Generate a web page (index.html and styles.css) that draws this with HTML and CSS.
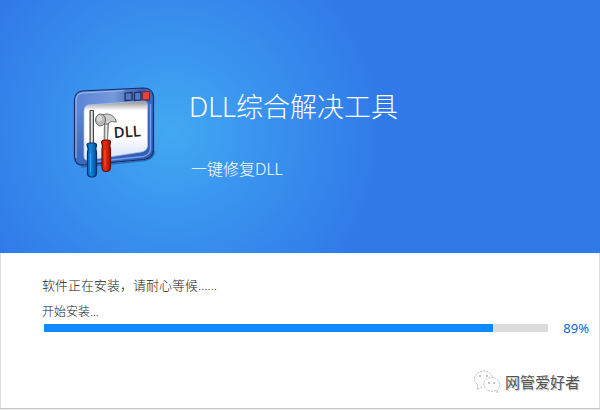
FILE: index.html
```
<!DOCTYPE html>
<html lang="zh-CN">
<head>
    <meta charset="UTF-8">
    <meta name="viewport" content="width=device-width, initial-scale=1.0">
    <title>DLL综合解决工具</title>
    <link rel="stylesheet" href="styles.css">
</head>
<body>

    <header class="banner">
        <svg class="app-icon" viewBox="0 0 100 105" aria-hidden="true">
            <defs>
                <linearGradient id="frame" x1="0" y1="0" x2="1" y2="1">
                    <stop offset="0" stop-color="#6f98dc"/>
                    <stop offset="0.45" stop-color="#3f6cc0"/>
                    <stop offset="1" stop-color="#2f59ad"/>
                </linearGradient>
                <linearGradient id="bar" x1="0" y1="0" x2="1" y2="0">
                    <stop offset="0" stop-color="#5c86d6"/>
                    <stop offset="0.5" stop-color="#7699da"/>
                    <stop offset="1" stop-color="#2c4c98"/>
                </linearGradient>
                <linearGradient id="paper" x1="0" y1="0" x2="0" y2="1">
                    <stop offset="0" stop-color="#8d8d8d"/>
                    <stop offset="0.16" stop-color="#ffffff"/>
                    <stop offset="0.6" stop-color="#ffffff"/>
                    <stop offset="1" stop-color="#d3e3f8"/>
                </linearGradient>
                <linearGradient id="blue" x1="0" y1="0" x2="1" y2="0">
                    <stop offset="0" stop-color="#0764b8"/>
                    <stop offset="0.4" stop-color="#1188e0"/>
                    <stop offset="1" stop-color="#034b96"/>
                </linearGradient>
                <linearGradient id="red" x1="0" y1="0" x2="1" y2="0">
                    <stop offset="0" stop-color="#c61d08"/>
                    <stop offset="0.4" stop-color="#ea2c0c"/>
                    <stop offset="1" stop-color="#a51002"/>
                </linearGradient>
                <linearGradient id="steel" x1="0" y1="0" x2="1" y2="0">
                    <stop offset="0" stop-color="#777777"/>
                    <stop offset="0.5" stop-color="#f4f4f4"/>
                    <stop offset="1" stop-color="#858585"/>
                </linearGradient>
            </defs>
            <!-- window -->
            <path d="M17 87 L81 80.500 Q90 79 90.500 71" fill="none" stroke="#173d80" stroke-opacity="0.5" stroke-width="1.500"/>
            <path d="M18 11 L79 8 Q89 8 89.500 17 V70 Q89 78 80 79.500 L20 85 Q11 86 10.500 77 V20 Q11 12 18 11Z" fill="url(#frame)" stroke="#172d66" stroke-width="1.200"/>
            <path d="M18 12.500 L79 9.500 Q85 9.500 86 17 V21 L22 25 Q18 26 17 33 L13 35 V21 Q13 13 18 12.500Z" fill="url(#bar)"/>
            <path d="M12 78 V21 Q12 14 18 13 L60 10.500" fill="none" stroke="#9dbcf0" stroke-width="1"/>
            <path d="M86.500 24 V69 Q86 75 79 76.500 L24 82.500" fill="none" stroke="#6f9df0" stroke-width="1.500"/>
            <path d="M24 25 L79 21 Q83.500 21 83.500 26 V66 Q83 71 77 72 L25 80 Q20 81 20 76 V31 Q20 26 24 25Z" fill="url(#paper)" stroke="#a9c4f2" stroke-width="0.800"/>
            <path d="M61 13 L68 12.500 V20 L61 20.500Z M70.500 12.500 L77 12 V20 L70.500 20.500Z" fill="#5578bd" stroke="#172c63" stroke-width="1.200"/>
            <path d="M78.500 12 L85.500 11.500 V19.500 L78.500 20Z" fill="#ee4030" stroke="#7f2633"/>
            <text class="icon-text" x="50" y="58" transform="rotate(-4 50 58)">DLL</text>
            <!-- screwdriver -->
            <path d="M26 30.500 H29.500 V64 H26Z" fill="url(#steel)" stroke="#454545" stroke-width="1"/>
            <path d="M23 65 Q23 63 26 63 H30 Q32.500 63 32.500 65 L31.800 69 L32.500 72 V93 Q32.500 97 28 97 Q23.500 97 23.500 93 V72 L24.200 69Z" fill="url(#blue)" stroke="#062f65" stroke-width="1.200"/>
            <path d="M26.500 73 V92" stroke="#3ba0ec" stroke-width="1"/>
            <!-- hammer -->
            <path d="M40.500 43 H44.500 L43.500 62 H40Z" fill="url(#steel)" stroke="#666666" stroke-width="0.800"/>
            <path d="M37 35 L43 34 Q50 34 52.500 42 L47 41.500 L44 44 L38 44Z" fill="#cecece" stroke="#5b5b5b" stroke-width="0.800"/>
            <ellipse cx="36.500" cy="40" rx="5" ry="6" fill="#b9b9b9" stroke="#666666"/>
            <ellipse cx="35.500" cy="38.500" rx="2.500" ry="3" fill="#d9d9d9"/>
            <path d="M37.500 62 Q38 60 41 60 H44 Q46.500 60 46.500 62 L45.800 66 L46.500 69 V87 Q46.500 91.500 42 91.500 Q38 91.500 38 87 V69 L38.500 66Z" fill="url(#red)" stroke="#650f06" stroke-width="1.200"/>
            <path d="M41 70 V86" stroke="#fa5531" stroke-width="1"/>
        </svg>
        <div class="banner-text">
            <h1>DLL综合解决工具</h1>
            <p>一键修复DLL</p>
        </div>
    </header>

    <main class="install-panel">
        <p class="message">软件正在安装，请耐心等候......</p>
        <label class="step" for="installProgress">开始安装...</label>
        <div class="progress-row">
            <progress id="installProgress" value="89" max="100"></progress>
            <span class="percent">89%</span>
        </div>

        <div class="account">
            <svg class="account-icon" viewBox="0 0 28 24" aria-hidden="true">
                <g fill="none" stroke="#aaaaaa" stroke-width="0.800" stroke-dasharray="2 1">
                    <path d="M9 17 L4 19.500 L5 15 Q0 11 2 6 Q5 1 11 1 Q18 2 19 7"/>
                    <path d="M23 20.500 Q15 23 11.500 17 Q9 10 16 8 Q23 6 26 12 Q28 17 24 20 L24.500 23Z"/>
                </g>
                <path d="M6 6 h2 M13 6 h2 M15 13 h2 M20 13 h2" stroke="#888888" stroke-width="1"/>
            </svg>
            <span>网管爱好者</span>
        </div>
    </main>

</body>
</html>
```

FILE: styles.css
```
* {
    box-sizing: border-box;
}
body {
    font-family: "Noto Sans", "Noto Sans CJK SC", sans-serif;
    display: flex;
    flex-direction: column;
    min-height: 100vh;
    margin: 0;
    background-color: #ececec;
}
h1, p {
    margin: 0;
    font-weight: 300;
}

/* Blue banner */
.banner {
    display: flex;
    align-items: flex-start;
    gap: 25px;
    padding: 80px 24px 68px 64px;
    color: white;
    background: radial-gradient(circle at 172px 132px, #42a9f3 0, #3a93ee 90px, #3079e8 215px);
}
.app-icon {
    flex: none;
    width: 100px;
    height: 105px;
}
.icon-text {
    font: 600 15px "Open Sans", sans-serif;
    fill: #222;
}
.banner-text {
    padding-top: 8px;
}
.banner h1 {
    font-size: 27px;
    line-height: 38px;
}
.banner p {
    margin-top: 31px;
    padding-left: 2px;
    font-size: 16px;
    line-height: 24px;
}

/* Install status */
.install-panel {
    flex: 1;
    display: flex;
    flex-direction: column;
    margin-bottom: 1px;
    padding: 22px 10px 14px 41px;
    color: #222;
    background-color: white;
    border: 1px solid #dcdcdc;
    border-top: none;
    border-bottom-color: #c8c8c8;
}
.message {
    font-size: 13px;
    line-height: 20px;
}
.step {
    margin-top: 9px;
    font-size: 12px;
    font-weight: 300;
    line-height: 16px;
}
.progress-row {
    display: flex;
    align-items: center;
    gap: 15px;
    padding-left: 2px;
}
progress {
    flex: 1;
    min-width: 0;
    height: 8px;
    border: none;
    background-color: #dcdcdc;
    appearance: none;
}
progress::-webkit-progress-bar {
    background-color: #dcdcdc;
}
progress::-webkit-progress-value {
    background-color: #1088ff;
}
.percent {
    color: #0867cf;
    font-size: 13px;
    line-height: 16px;
}

/* Account name in the corner */
.account {
    display: flex;
    align-items: center;
    justify-content: flex-end;
    gap: 4px;
    margin-top: auto;
    padding-right: 9px;
    color: #555;
    font-size: 15px;
    line-height: 24px;
    text-shadow: 1px 1px 0 #ccc;
}
.account-icon {
    width: 28px;
    height: 24px;
}
```
